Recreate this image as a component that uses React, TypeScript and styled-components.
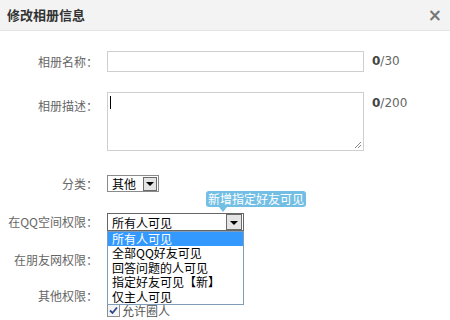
import React from "react";
import styled, { createGlobalStyle } from "styled-components";

const Global = createGlobalStyle`
  html, body { margin: 0; padding: 0; background: #fff; }
  body { font-family: "Noto Sans CJK SC", "Noto Sans", sans-serif; }
  * { box-sizing: border-box; }
`;

const Dialog = styled.div`
  width: 450px;
  height: 320px;
  overflow: hidden;
  background: #fff;
`;

const Header = styled.div`
  height: 31px;
  display: flex;
  align-items: center;
  justify-content: space-between;
  padding: 0 8px 0 7px;
  background: #f3f3f3;
  border-bottom: 1px solid #e4e4e4;
`;

const Title = styled.h1`
  margin: 0;
  font-size: 13px;
  font-weight: bold;
  color: #333;
  line-height: 30px;
`;

const Close = styled.span`
  font-family: "DejaVu Sans", sans-serif;
  font-size: 17px;
  color: #777;
  line-height: 30px;
  font-weight: bold;
`;

const Form = styled.div`
  display: flex;
  flex-direction: column;
  padding-top: 20px;
`;

const Row = styled.div<{ $mt?: number }>`
  display: flex;
  align-items: flex-start;
  margin-top: ${(p) => p.$mt ?? 0}px;
`;

const Label = styled.div<{ $h: number; $pt?: number }>`
  width: 107px;
  padding-right: 9px;
  text-align: right;
  font-size: 12px;
  color: #666;
  line-height: ${(p) => p.$h}px;
  padding-top: ${(p) => p.$pt ?? 0}px;
  white-space: nowrap;
`;

const TextInput = styled.div`
  width: 257px;
  height: 21px;
  border: 1px solid #cfcfcf;
`;

const TextArea = styled.div`
  position: relative;
  width: 257px;
  height: 59px;
  border: 1px solid #cfcfcf;
  padding: 3px 0 0 2px;
`;

const Caret = styled.div`
  width: 1px;
  height: 13px;
  background: #000;
`;

const Grip = styled.svg`
  position: absolute;
  right: 1px;
  bottom: 1px;
`;

const Counter = styled.div<{ $pt?: number }>`
  margin-left: 8px;
  font-family: "DejaVu Sans", sans-serif;
  font-size: 12px;
  color: #666;
  line-height: 21px;
  padding-top: ${(p) => p.$pt ?? 0}px;
  b { color: #444; }
`;

const Field = styled.div`
  position: relative;
`;

const Select = styled.div<{ $w: number; $h: number; $border: string }>`
  width: ${(p) => p.$w}px;
  height: ${(p) => p.$h}px;
  border: 1px solid ${(p) => p.$border};
  display: flex;
  align-items: center;
  justify-content: space-between;
  padding: 0 1px 0 4px;
  background: #fff;
  font-size: 12px;
  color: #000;
`;

const Arrow = styled.div<{ $s: number }>`
  width: ${(p) => p.$s}px;
  height: ${(p) => p.$s}px;
  margin-left: auto;
  background: #e4e4e4;
  border: 1px solid #6b6b6b;
  display: flex;
  align-items: center;
  justify-content: center;
  &::after {
    content: "";
    border-left: 4px solid transparent;
    border-right: 4px solid transparent;
    border-top: 4px solid #000;
    margin-top: 1px;
  }
`;

const Tip = styled.div`
  position: absolute;
  left: 99px;
  top: -22px;
  height: 16px;
  padding: 0 2px;
  background: #73bee3;
  color: #fff;
  font-size: 12px;
  line-height: 16px;
  border-radius: 3px;
  white-space: nowrap;
  &::after {
    content: "";
    position: absolute;
    left: 13px;
    bottom: -5px;
    border-left: 4px solid transparent;
    border-right: 4px solid transparent;
    border-top: 5px solid #73bee3;
  }
`;

const List = styled.ul`
  position: absolute;
  left: 0;
  top: 18px;
  width: 137px;
  margin: 0;
  padding: 0;
  list-style: none;
  background: #fff;
  border: 1px solid #7f9db9;
  z-index: 2;
`;

const Item = styled.li<{ $active?: boolean }>`
  height: 14.4px;
  line-height: 14px;
  padding-left: 4px;
  font-size: 12px;
  color: ${(p) => (p.$active ? "#fff" : "#000")};
  background: ${(p) => (p.$active ? "#3399ff" : "transparent")};
  white-space: nowrap;
`;

const Checks = styled.div`
  display: flex;
  flex-direction: column;
  gap: 2px;
  padding-top: 1px;
`;

const Check = styled.label`
  display: flex;
  align-items: center;
  gap: 2px;
  font-size: 12px;
  color: #555;
  line-height: 13px;
`;

const Box = styled.span`
  width: 13px;
  height: 13px;
  border: 1px solid #8e8f8f;
  background: #f4f4f4;
  display: flex;
  align-items: center;
  justify-content: center;
`;

const options = ["所有人可见", "全部QQ好友可见", "回答问题的人可见", "指定好友可见【新】", "仅主人可见"];

export default function App() {
  return (
    <Dialog>
      <Global />
      <Header>
        <Title>修改相册信息</Title>
        <Close>×</Close>
      </Header>
      <Form>
        <Row>
          <Label $h={21}>相册名称：</Label>
          <TextInput />
          <Counter><b>0</b>/30</Counter>
        </Row>
        <Row $mt={20}>
          <Label $h={21} $pt={3}>相册描述：</Label>
          <TextArea>
            <Caret />
            <Grip width="9" height="9" viewBox="0 0 9 9">
              <path d="M8 2 L2 8 M8 5 L5 8" stroke="#888" strokeWidth="1" />
            </Grip>
          </TextArea>
          <Counter $pt={1}><b>0</b>/200</Counter>
        </Row>
        <Row $mt={24}>
          <Label $h={17}>分类：</Label>
          <Select $w={52} $h={17} $border="#8a8a8a">
            <span>其他</span>
            <Arrow $s={14} />
          </Select>
        </Row>
        <Row $mt={21}>
          <Label $h={18}>在QQ空间权限：</Label>
          <Field>
            <Tip>新增指定好友可见</Tip>
            <Select $w={137} $h={18} $border="#666">
              <span>所有人可见</span>
              <Arrow $s={16} />
            </Select>
            <List>
              {options.map((o, i) => (
                <Item key={o} $active={i === 0}>{o}</Item>
              ))}
            </List>
          </Field>
        </Row>
        <Row $mt={20}>
          <Label $h={18}>在朋友网权限：</Label>
          <Select $w={137} $h={18} $border="#666">
            <Arrow $s={16} />
          </Select>
        </Row>
        <Row $mt={19}>
          <Label $h={16}>其他权限：</Label>
          <Checks>
            <Check>
              <Box />
            </Check>
            <Check>
              <Box>
                <svg width="9" height="9" viewBox="0 0 9 9">
                  <path d="M1 4.5 L3.5 7 L8 1.5" stroke="#2b4a8a" strokeWidth="1.8" fill="none" />
                </svg>
              </Box>
              <span>允许圈人</span>
            </Check>
          </Checks>
        </Row>
      </Form>
    </Dialog>
  );
}
